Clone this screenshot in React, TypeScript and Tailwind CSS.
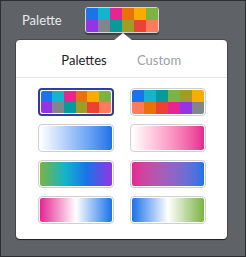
import React from "react";

const googleColors = [
  "#1a73e8", "#12b5cb", "#e52592", "#e8710a", "#f9ab00", "#7cb342",
  "#9334e6", "#80868b", "#079a9b", "#9e9d24", "#ea4335", "#ff7b5c",
];

const altColors = [
  "#1a73e8", "#12b5cb", "#079a9b", "#7cb342", "#9e9d24", "#f9ab00",
  "#ff7b5c", "#e8710a", "#ea4335", "#e52592", "#9334e6", "#80868b",
];

function Cells({ colors }: { colors: string[] }) {
  return (
    <div className="grid grid-cols-6 grid-rows-2 w-full h-full rounded-[2px] overflow-hidden">
      {colors.map((c, i) => (
        <div key={i} style={{ backgroundColor: c }} />
      ))}
    </div>
  );
}

function Option({ selected, children }: { selected?: boolean; children: React.ReactNode }) {
  return (
    <div
      className={
        selected
          ? "w-[76px] h-[28px] rounded-[4px] border-2 border-[#2f3ca0] p-px bg-white"
          : "w-[76px] h-[28px] rounded-[4px] border border-[#cfcfcf] p-px bg-white"
      }
    >
      {children}
    </div>
  );
}

export default function App() {
  return (
    <div
      className="w-[246px] h-[257px] bg-[#5f6368] border border-[#2c2e32] overflow-hidden"
      style={{ fontFamily: "Lato, 'Open Sans', sans-serif" }}
    >
      {/* Header row */}
      <div className="flex items-center pt-[6px] pl-[21px]">
        <span className="w-[63px] text-[13px] text-[#e8eaed] leading-none">Palette</span>
        <div className="w-[74px] h-[26px] rounded-[3px] border border-[#d5d5d5] shadow-[0_2px_1px_rgba(0,0,0,0.35)]">
          <Cells colors={googleColors} />
        </div>
      </div>

      {/* Popover */}
      <div className="relative mt-[7px] ml-[15px] w-[211px] h-[199px] bg-white rounded-[4px] shadow-[0_1px_1px_rgba(0,0,0,0.6),0_0_0_1px_rgba(0,0,0,0.25)]">
        <div className="absolute -top-[7px] left-[97px] w-0 h-0 border-l-[10px] border-r-[10px] border-b-[8px] border-l-transparent border-r-transparent border-b-white" />

        <div className="h-[38px] pt-[5px] flex justify-center items-center border-b border-[#e3e3e3] text-[13px]">
          <div className="w-[75px] text-center text-[#202124]">Palettes</div>
          <div className="w-[75px] text-center text-[#9aa0a6]">Custom</div>
        </div>

        <div className="grid grid-cols-[76px_76px] justify-center gap-x-4 gap-y-2 pt-[10px]">
          <Option selected>
            <Cells colors={googleColors} />
          </Option>
          <Option>
            <Cells colors={altColors} />
          </Option>
          <Option>
            <div className="w-full h-full rounded-[2px] bg-linear-to-r from-white to-[#1a73e8]" />
          </Option>
          <Option>
            <div className="w-full h-full rounded-[2px] bg-linear-to-r from-white to-[#e52592]" />
          </Option>
          <Option>
            <div className="w-full h-full rounded-[2px] bg-[linear-gradient(to_right,#7cb342,#12b5cb_35%,#1a73e8_65%,#9334e6)]" />
          </Option>
          <Option>
            <div className="w-full h-full rounded-[2px] bg-linear-to-r from-[#e52592] to-[#1a73e8]" />
          </Option>
          <Option>
            <div className="w-full h-full rounded-[2px] bg-[linear-gradient(to_right,#e52592,#ffffff_50%,#1a73e8)]" />
          </Option>
          <Option>
            <div className="w-full h-full rounded-[2px] bg-[linear-gradient(to_right,#1a73e8,#ffffff_50%,#7cb342)]" />
          </Option>
        </div>
      </div>
    </div>
  );
}
